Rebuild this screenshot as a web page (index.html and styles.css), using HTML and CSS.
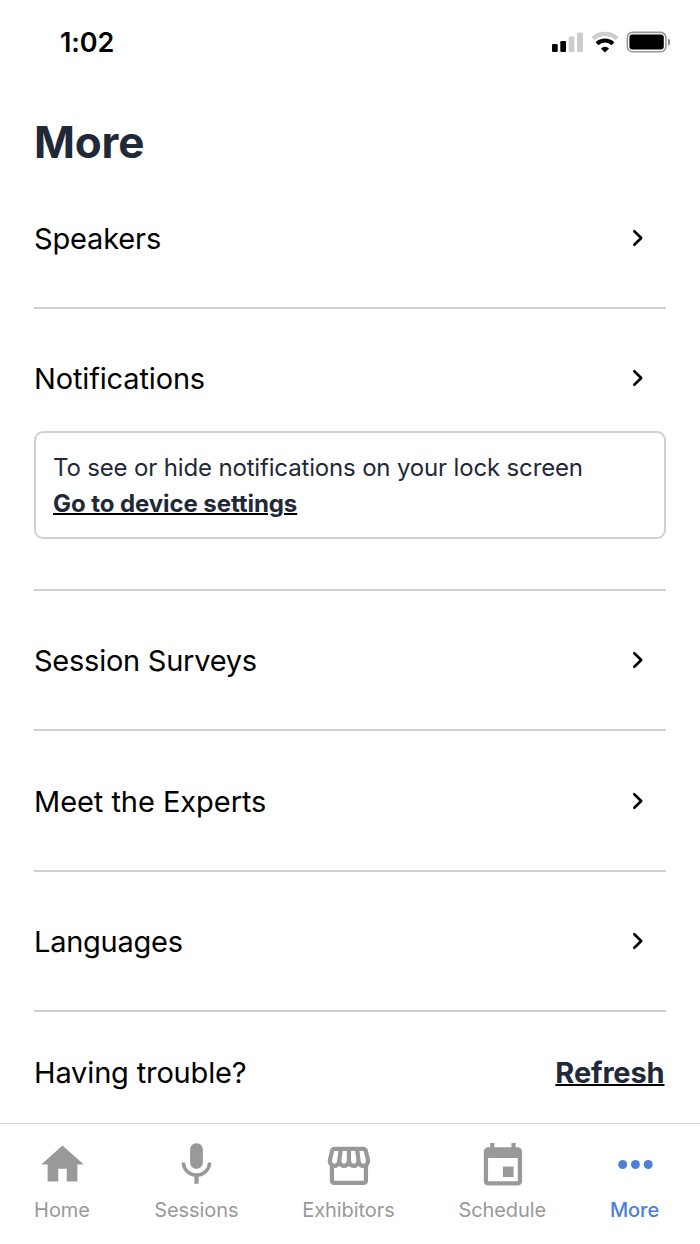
FILE: index.html
```html
<!DOCTYPE html>
<html lang="en">
<head>
<meta charset="utf-8">
<title>More</title>
<link rel="stylesheet" href="styles.css">
</head>
<body>
<div class="screen">
  <header class="status">
    <span class="time">1:02</span>
    <svg class="status-icons" width="120" height="24" viewBox="0 0 120 24">
      <rect x="2" y="13" width="5.7" height="8" rx="1.3"/>
      <rect x="10.3" y="10" width="5.7" height="11" rx="1.3"/>
      <rect x="18.7" y="5.5" width="5.7" height="15.5" rx="1.3" fill="#ccc"/>
      <rect x="27" y="1.5" width="6" height="19.5" rx="1.3" fill="#ccc"/>
      <path d="M43 7.6a17.5 17.5 0 0 1 24 0" fill="none" stroke="#ccc" stroke-width="4.4"/>
      <path d="M47 12.8a11.6 11.6 0 0 1 16 0" fill="none" stroke="#000" stroke-width="4"/>
      <path d="M50.9 17.4a6.2 6.2 0 0 1 8.2 0L55 21.4z"/>
      <rect x="77.3" y="1.4" width="38.6" height="19.4" rx="5.2" fill="none" stroke="#999" stroke-width="1.6"/>
      <rect x="79.4" y="3.6" width="34.4" height="15" rx="3"/>
      <path d="M118 7.6c3.6 1.4 3.6 5.6 0 7z" fill="#8c8c8c"/>
    </svg>
  </header>
  <main class="content">
    <h1 class="title">More</h1>
    <section class="row"><div class="line"><span class="label">Speakers</span><svg class="chev" viewBox="0 0 12 18"><path d="M2.3 2.2 9.2 9l-6.9 6.8"/></svg></div></section>
    <section class="row tall"><div class="line"><span class="label">Notifications</span><svg class="chev" viewBox="0 0 12 18"><path d="M2.3 2.2 9.2 9l-6.9 6.8"/></svg></div>
      <div class="notice"><p class="hint">To see or hide notifications on your lock screen</p><a class="link">Go to device settings</a></div>
    </section>
    <section class="row"><div class="line"><span class="label tight">Session Surveys</span><svg class="chev" viewBox="0 0 12 18"><path d="M2.3 2.2 9.2 9l-6.9 6.8"/></svg></div></section>
    <section class="row"><div class="line"><span class="label wide">Meet the Experts</span><svg class="chev" viewBox="0 0 12 18"><path d="M2.3 2.2 9.2 9l-6.9 6.8"/></svg></div></section>
    <section class="row last"><div class="line"><span class="label tight">Languages</span><svg class="chev" viewBox="0 0 12 18"><path d="M2.3 2.2 9.2 9l-6.9 6.8"/></svg></div></section>
    <div class="trouble"><span class="label">Having trouble?</span><a class="refresh">Refresh</a></div>
  </main>
  <nav class="tabs">
    <div class="tab home"><svg class="icon" viewBox="0 0 24 24"><path d="M10 20v-6h4v6h5v-8h3L12 3 2 12h3v8z"/></svg><span>Home</span></div>
    <div class="tab sessions"><svg class="icon" viewBox="0 0 24 24"><path d="M12 14c1.66 0 2.99-1.34 2.99-3L15 5c0-1.66-1.34-3-3-3S9 3.34 9 5v6c0 1.66 1.34 3 3 3zm5.3-3c0 3-2.54 5.1-5.3 5.1S6.7 14 6.7 11H5c0 3.41 2.72 6.23 6 6.72V21h2v-3.28c3.28-.48 6-3.3 6-6.72h-1.7z"/></svg><span>Sessions</span></div>
    <div class="tab exhibitors"><svg class="icon" viewBox="-.2 -.6 24 24"><path d="M21.9 8.89l-1.05-4.37c-.22-.9-1-1.52-1.91-1.52H5.05c-.9 0-1.69.63-1.9 1.52L2.1 8.89c-.24 1.02-.02 2.06.62 2.88.08.11.19.19.28.29V19c0 1.1.9 2 2 2h14c1.1 0 2-.9 2-2v-6.94c.09-.09.2-.18.28-.28.64-.82.87-1.87.62-2.89zm-2.99-3.9l1.05 4.37c.1.42.01.84-.25 1.17-.14.18-.44.47-.94.47-.61 0-1.14-.49-1.21-1.14L16.98 5l1.93-.01zM13 5h1.96l.54 4.52c.05.39-.07.78-.33 1.07-.22.26-.54.41-.95.41-.67 0-1.22-.59-1.22-1.31V5zM8.49 9.52L9.04 5H11v4.69c0 .72-.55 1.31-1.29 1.31-.34 0-.65-.15-.89-.41-.25-.29-.37-.68-.33-1.07zm-4.45-.16L5.05 5h1.97l-.58 4.86c-.08.65-.6 1.14-1.21 1.14-.49 0-.8-.29-.93-.47-.27-.32-.36-.75-.26-1.17zM5 19v-6.03c.08.01.15.03.23.03.87 0 1.66-.36 2.24-.95.6.6 1.4.95 2.31.95.87 0 1.65-.36 2.23-.93.59.57 1.39.93 2.29.93.84 0 1.64-.35 2.24-.95.58.59 1.37.95 2.24.95.08 0 .15-.02.23-.03V19H5z"/></svg><span>Exhibitors</span></div>
    <div class="tab schedule"><svg class="icon" viewBox="-.2 -.9 24 24"><path d="M17 12h-5v5h5v-5zM16 1v2H8V1H6v2H5c-1.11 0-1.99.9-1.99 2L3 19c0 1.1.89 2 2 2h14c1.1 0 2-.9 2-2V5c0-1.1-.9-2-2-2h-1V1h-2zm3 18H5V8h14v11z"/></svg><span>Schedule</span></div>
    <div class="tab more"><svg class="icon" viewBox="-.45 0 24 24"><circle cx="6" cy="12" r="2.1"/><circle cx="12" cy="12" r="2.1"/><circle cx="18" cy="12" r="2.1"/></svg><span>More</span></div>
  </nav>
</div>
</body>
</html>
```

FILE: styles.css
```css
* { box-sizing: border-box; margin: 0; padding: 0; }
body { background: #fff; color: #000; font-family: Inter, "Liberation Sans", sans-serif; }
.screen { width: 700px; height: 1244px; display: flex; flex-direction: column; overflow: hidden; }
.status { height: 84px; padding: 31px 30px 0 60px; display: flex; justify-content: space-between; align-items: flex-start; }
.time { font-size: 27px; line-height: 24px; font-weight: 600; letter-spacing: -0.1px; }
.content { height: 1039px; padding: 0 34px; }
.title { height: 84.5px; padding-top: 32px; font-size: 44px; line-height: 53px; font-weight: 700; color: #1f2937; letter-spacing: -0.2px; }
.row { height: 140.4px; border-bottom: 2px solid #d1d1d1; }
.row.tall { height: 282px; }
.line { height: 141px; display: flex; align-items: center; justify-content: space-between; padding-right: 22px; }
.label { font-size: 29px; line-height: 36px; letter-spacing: -0.15px; }
.label.wide { letter-spacing: -0.05px; }
.label.tight { letter-spacing: -0.25px; }
.chev { width: 12px; height: 18px; margin-bottom: 2px; }
.chev path { fill: none; stroke: #000; stroke-width: 2.6; stroke-linecap: round; stroke-linejoin: round; }
.notice { margin-top: -19px; height: 108px; border: 2px solid #d1d1d1; border-radius: 9px; padding: 17px; color: #1f2937; }
.hint { font-size: 24px; line-height: 36px; letter-spacing: -0.16px; white-space: nowrap; }
.link, .refresh { display: block; font-weight: 700; text-decoration: underline; text-decoration-color: #000; text-decoration-thickness: 2px; color: #1f2937; }
.link { font-size: 24px; line-height: 36px; letter-spacing: -0.08px; }
.trouble { height: 111px; padding: 10px 1.5px 0 0; display: flex; align-items: center; justify-content: space-between; }
.refresh { font-size: 29px; line-height: 36px; letter-spacing: -0.15px; }
.tabs { height: 121px; border-top: 1px solid #d6d6d6; display: flex; justify-content: space-between; padding: 15px 41px 0 34px; color: #999; font-size: 20px; }
.tab { display: flex; flex-direction: column; align-items: center; white-space: nowrap; line-height: 26px; letter-spacing: -0.07px; }
.icon { width: 51px; height: 51px; fill: currentColor; margin-bottom: 7px; }
.home { width: 56px; } .sessions { width: 84px; } .exhibitors { width: 92px; } .schedule { width: 87px; }
.more { width: 49px; color: #4d7fd9; font-weight: 500; }
```
